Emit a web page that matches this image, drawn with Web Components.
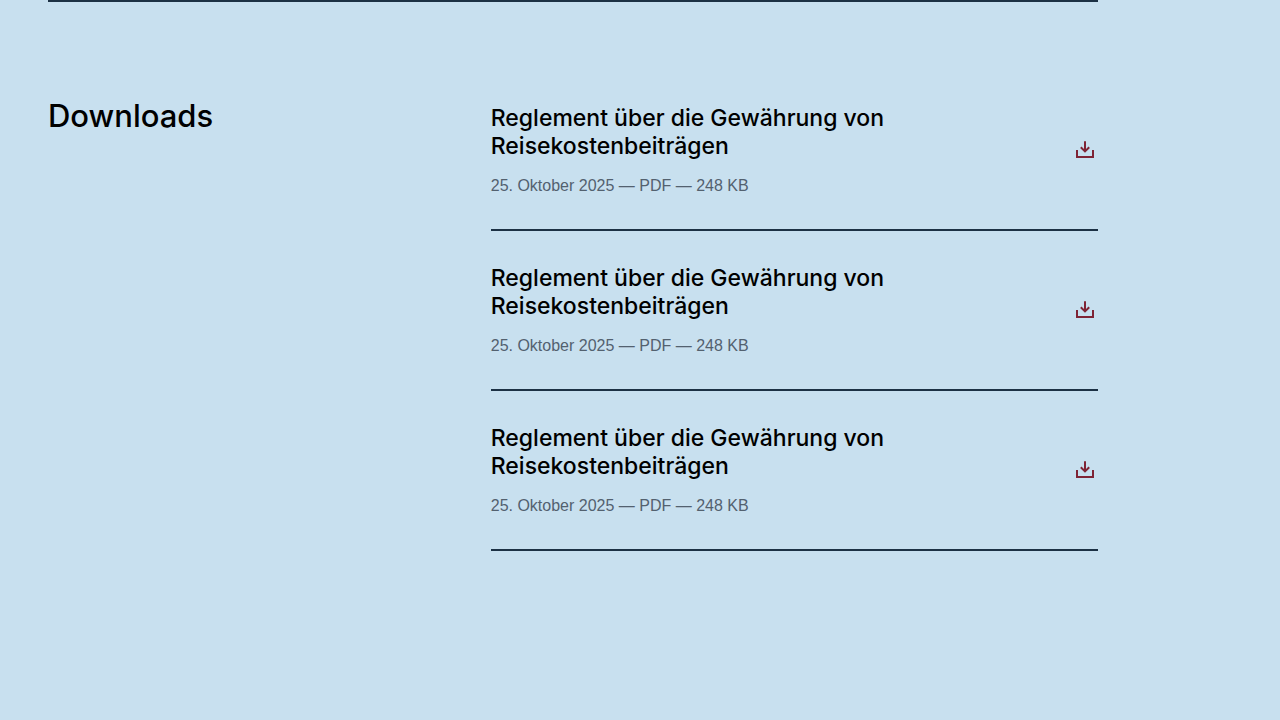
<!DOCTYPE html>
<html lang="de">
<head>
<meta charset="utf-8">
<meta name="viewport" content="width=device-width, initial-scale=1">
<title>Downloads</title>
<style>
  body {
    margin: 0;
    background: #c8e0ef;
    color: #000;
    font-family: Inter, "Liberation Sans", Arial, sans-serif;
  }
</style>
</head>
<body>
<download-section heading="Downloads">
  <download-item href="#reglement-1" date="25. Oktober 2025" type="PDF" size="248 KB">Reglement über die Gewährung von Reisekostenbeiträgen</download-item>
  <download-item href="#reglement-2" date="25. Oktober 2025" type="PDF" size="248 KB">Reglement über die Gewährung von Reisekostenbeiträgen</download-item>
  <download-item href="#reglement-3" date="25. Oktober 2025" type="PDF" size="248 KB">Reglement über die Gewährung von Reisekostenbeiträgen</download-item>
</download-section>

<template id="section-template">
  <style>
    :host { display: block; width: 82%; margin-left: 48px; }
    section {
      display: grid;
      grid-template-columns: repeat(12, 1fr);
      column-gap: 13px;
      border-top: 2px solid #1c3144;
      padding: 69px 0 128px;
    }
    h2 {
      grid-column: span 5;
      margin: 0;
      padding-top: 25px;
      font-size: 31px;
      line-height: 40px;
      font-weight: 500;
    }
    .list { grid-column: span 7; }
  </style>
  <section aria-labelledby="heading">
    <h2 id="heading"></h2>
    <div class="list"><slot></slot></div>
  </section>
</template>

<template id="item-template">
  <style>
    :host { display: block; }
    a {
      display: flex;
      align-items: center;
      justify-content: space-between;
      gap: 24px;
      padding: 33px 0;
      border-bottom: 2px solid #1c3144;
      color: inherit;
      text-decoration: none;
    }
    .text { max-width: 448px; }
    h3 {
      margin: 0 0 16px;
      font-size: 23px;
      line-height: 28px;
      font-weight: 500;
    }
    p {
      margin: 0;
      font-family: "Liberation Sans", Arial, sans-serif;
      font-size: 16px;
      line-height: 20px;
      color: #53616f;
    }
    svg { display: block; flex: none; }
  </style>
  <a>
    <div class="text">
      <h3><slot></slot></h3>
      <p></p>
    </div>
    <svg width="26" height="24" viewBox="0 0 26 24" fill="none" stroke="#7f2435" stroke-width="2" aria-hidden="true">
      <path d="M5 12v7h16v-7M13 3.3v10M8.8 9.2l4.2 4.2 4.2-4.2"/>
    </svg>
  </a>
</template>

<script>
  class DownloadSection extends HTMLElement {
    connectedCallback() {
      if (this.shadowRoot) return;
      const root = this.attachShadow({ mode: "open" });
      root.append(document.getElementById("section-template").content.cloneNode(true));
      root.querySelector("h2").textContent = this.getAttribute("heading");
    }
  }

  class DownloadItem extends HTMLElement {
    connectedCallback() {
      if (this.shadowRoot) return;
      const root = this.attachShadow({ mode: "open" });
      root.append(document.getElementById("item-template").content.cloneNode(true));
      root.querySelector("a").href = this.getAttribute("href");
      root.querySelector("p").textContent =
        ["date", "type", "size"].map((name) => this.getAttribute(name)).join(" — ");
    }
  }

  customElements.define("download-section", DownloadSection);
  customElements.define("download-item", DownloadItem);
</script>
</body>
</html>
